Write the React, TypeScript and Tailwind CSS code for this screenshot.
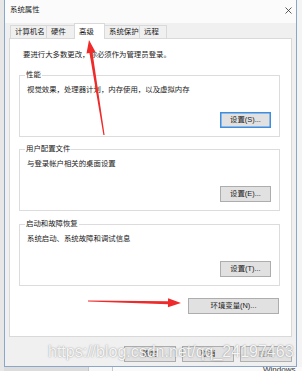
const font = "font-['Liberation_Sans','Noto_Sans_CJK_SC',sans-serif]";

const btnBase =
  "h-[16px] flex items-center justify-center border bg-[#e1e1e1] text-[7.4px] leading-none text-[#1a1a1a]";

const tabs = [
  { label: "计算机名", w: "w-[37px]" },
  { label: "硬件", w: "w-[29px]" },
  { label: "高级", w: "w-[31px]", active: true },
  { label: "系统保护", w: "w-[36px]" },
  { label: "远程", w: "w-[28px]" },
];

const Group = ({
  title,
  desc,
  button,
  focused,
  className,
}: {
  title: string;
  desc: string;
  button: string;
  focused?: boolean;
  className?: string;
}) => (
  <div
    className={`relative ml-[9px] mr-[11px] border border-[#dcdcdc] pt-[9px] pb-[8px] pl-[7px] pr-[8px] ${className ?? ""}`}
  >
    <span className="absolute -top-[6px] left-[5px] bg-white px-[1px] leading-[10px]">{title}</span>
    <p className="leading-[10px]">{desc}</p>
    <div className="mt-[17px] flex justify-end">
      <div
        className={`${btnBase} w-[51px] ${focused ? "border-[#3d8ee0] shadow-[inset_0_0_0_0.5px_#3d8ee0]" : "border-[#adadad]"}`}
      >
        {button}
      </div>
    </div>
  </div>
);

export default function App() {
  return (
    <div className={`relative w-[302px] h-[371px] overflow-hidden bg-[#f4f4f4] text-[7.4px] text-[#1a1a1a] ${font}`}>
      <div className="flex h-full">
        <div className="w-[4px] bg-[#e7e7e7]" />
        <div className="flex flex-col">
          {/* window */}
          <div className="w-[293px] h-[367px] border-x border-b border-[#8aa6c9] bg-[#f0f0f0] flex flex-col">
            {/* title bar */}
            <div className="h-[23px] bg-[#fbfbfb] flex items-start pt-[5px] pl-[5px]">
              <span className="leading-[10px]">系统属性</span>
              <svg className="ml-auto mr-[4px] mt-[2px]" width="7" height="7" viewBox="0 0 7 7">
                <path d="M0.5 0.5L6.5 6.5M6.5 0.5L0.5 6.5" stroke="#333" strokeWidth="0.8" />
              </svg>
            </div>

            {/* tabs */}
            <div className="h-[15px] flex items-end pl-[5px]">
              {tabs.map((t) =>
                t.active ? (
                  <div
                    key={t.label}
                    className={`${t.w} -ml-px h-[16px] -mb-px relative z-10 border border-b-0 border-[#d9d9d9] bg-white flex items-center pl-[4px] leading-[10px]`}
                  >
                    {t.label}
                  </div>
                ) : (
                  <div
                    key={t.label}
                    className={`${t.w} -ml-px first:ml-0 h-[13px] border border-b-0 border-[#d9d9d9] bg-[#f0f0f0] flex items-center pl-[4px] leading-[10px]`}
                  >
                    {t.label}
                  </div>
                )
              )}
            </div>

            {/* tab panel */}
            <div className="mx-[4px] border border-[#d9d9d9] bg-white pt-[11px] pb-[22px]">
              <p className="pl-[13px] leading-[10px]">要进行大多数更改，你必须作为管理员登录。</p>
              <Group
                className="mt-[15px]"
                title="性能"
                desc="视觉效果，处理器计划，内存使用，以及虚拟内存"
                button="设置(S)..."
                focused
              />
              <Group className="mt-[12px]" title="用户配置文件" desc="与登录帐户相关的桌面设置" button="设置(E)..." />
              <Group className="mt-[13px]" title="启动和故障恢复" desc="系统启动、系统故障和调试信息" button="设置(T)..." />
              <div className="mt-[12px] flex justify-end pr-[12px]">
                <div className={`${btnBase} w-[91px] border-[#adadad]`}>环境变量(N)...</div>
              </div>
            </div>

            {/* dialog buttons */}
            <div className="mt-[9px] flex justify-end gap-[6px] pr-[4px]">
              <div className={`${btnBase} w-[52px] border-[#adadad]`}>确定</div>
              <div className={`${btnBase} w-[52px] border-[#adadad]`}>取消</div>
              <div className={`${btnBase} w-[52px] border-[#b0b0b0] bg-[#c6c6c6] text-[#8a8a8a]`}>应用</div>
            </div>
          </div>

          {/* desktop strip below */}
          <div className="h-[4px] flex overflow-hidden">
            <div className="w-[84px] bg-[#dcdcdc]" />
            <div className="w-[25px] border-x border-[#c8c8c8] bg-[#f7f7f7]" />
            <div className="flex-1 bg-[#fafafa] pl-[150px]">
              <span className="block -mt-[1px] text-[8px] leading-[8px] text-[#333]">Windows E</span>
            </div>
          </div>
        </div>
        <div className="flex-1 bg-[#fafafa]" />
      </div>

      {/* red annotation arrows */}
      <svg className="absolute inset-0 pointer-events-none" width="302" height="371" viewBox="0 0 302 371">
        <polygon
          points="89,40 95.5,52.1 92.5,52.6 104.6,134.9 103.4,135.1 89.5,53 86.5,53.5"
          fill="#ee2a2a"
        />
        <polygon
          points="181,303 168.1,298.2 168,301.2 88,300.5 88,301.5 168,304.2 167.9,307.2"
          fill="#ee2a2a"
        />
      </svg>

      {/* watermark */}
      <span className="absolute left-[48px] top-[344px] font-['Liberation_Sans',sans-serif] text-[16px] leading-none text-white/90 [text-shadow:0_0_1.5px_rgba(80,80,80,0.7)] pointer-events-none">
        https://blog.csdn.net/qq_24197463
      </span>
    </div>
  );
}
